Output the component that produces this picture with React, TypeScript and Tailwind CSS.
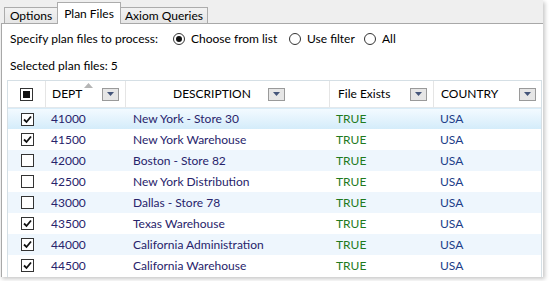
import React from 'react';

type Row = { checked: boolean; dept: string; desc: string };

const rows: Row[] = [
  { checked: true, dept: '41000', desc: 'New York - Store 30' },
  { checked: true, dept: '41500', desc: 'New York Warehouse' },
  { checked: false, dept: '42000', desc: 'Boston - Store 82' },
  { checked: false, dept: '42500', desc: 'New York Distribution' },
  { checked: false, dept: '43000', desc: 'Dallas - Store 78' },
  { checked: true, dept: '43500', desc: 'Texas Warehouse' },
  { checked: true, dept: '44000', desc: 'California Administration' },
  { checked: true, dept: '44500', desc: 'California Warehouse' },
];

const Check = ({ checked }: { checked: boolean }) => (
  <div className="w-[13px] h-[13px] border border-[#333] bg-white flex items-center justify-center">
    {checked && (
      <svg width="9" height="9" viewBox="0 0 9 9">
        <path d="M1 4.5 L3.5 7 L8 1.5" stroke="#111" strokeWidth="1.8" fill="none" />
      </svg>
    )}
  </div>
);

const Radio = ({ on, label, w }: { on?: boolean; label: string; w: string }) => (
  <label className={`flex items-center gap-[6px] ${w}`}>
    <span className="w-[12px] h-[12px] rounded-full border border-[#333] bg-white flex items-center justify-center">
      {on && <span className="w-[6px] h-[6px] rounded-full bg-[#111]" />}
    </span>
    <span>{label}</span>
  </label>
);

const DropBtn = () => (
  <div className="w-[17px] h-[13px] border border-[#9a9a9a] bg-[#e6e6e6] flex items-center justify-center">
    <svg width="7" height="4" viewBox="0 0 7 4">
      <path d="M0 0 H7 L3.5 4 Z" fill="#44557a" />
    </svg>
  </div>
);

const App = () => {
  return (
    <div className="w-[549px] h-[281px] bg-white text-[12px] text-black" style={{ fontFamily: 'Lato, "Noto Sans", sans-serif' }}>
      <div className="w-[543px] h-[277px] bg-[#efefef] flex flex-col shadow-[2px_2px_4px_rgba(0,0,0,0.22)]">
        {/* tabs */}
        <div className="h-[23px] flex items-end pl-[4px] relative z-10">
          <div className="h-[16px] w-[54px] border border-b-0 border-[#acacac] bg-gradient-to-b from-[#f2f2f2] to-[#e6e6e6] flex items-center justify-center leading-none pt-[1px]">
            Options
          </div>
          <div className="h-[22px] w-[64px] -ml-px -mb-px border border-b-0 border-[#acacac] bg-white flex items-center justify-center leading-none">
            Plan Files
          </div>
          <div className="h-[16px] w-[88px] -ml-px border border-b-0 border-[#acacac] bg-gradient-to-b from-[#f2f2f2] to-[#e6e6e6] flex items-center justify-center leading-none pt-[1px]">
            Axiom Queries
          </div>
        </div>

        {/* panel */}
        <div className="flex-1 ml-px border-t border-l border-[#a8a8a8] bg-white flex flex-col min-h-0">
          <div className="h-[16px] mt-[7px] pl-[8px] flex items-center">
            <span className="w-[164px]">Specify plan files to process:</span>
            <div className="flex items-center -ml-[1px]">
              <Radio on label="Choose from list" w="w-[116px]" />
              <Radio label="Use filter" w="w-[75px]" />
              <Radio label="All" w="w-[40px]" />
            </div>
          </div>
          <div className="h-[16px] mt-[11px] pl-[8px] flex items-center">Selected plan files: 5</div>

          {/* grid */}
          <div className="mt-[6px] ml-[5px] mr-[1px] flex-1 border-l border-t border-r border-[#d5dfe5] overflow-hidden">
            <div className="grid grid-cols-[38px_80px_204px_104px_107px] h-[27px] border-b border-[#e3e8ec] bg-white">
              <div className="flex items-center justify-center border-r border-[#e5e5e5]">
                <div className="w-[13px] h-[13px] border border-[#333] bg-white flex items-center justify-center">
                  <div className="w-[7px] h-[7px] bg-[#111]" />
                </div>
              </div>
              <div className="relative flex items-center justify-between pl-[6px] pr-[6px] border-r border-[#e5e5e5]">
                <svg className="absolute left-[38px] top-[2px]" width="9" height="5" viewBox="0 0 9 5">
                  <path d="M0 5 L4.5 0 L9 5 Z" fill="#b5b5b5" />
                </svg>
                <span>DEPT</span>
                <DropBtn />
              </div>
              <div className="flex items-center justify-between pl-[47px] pr-[44px] border-r border-[#e5e5e5]">
                <span>DESCRIPTION</span>
                <DropBtn />
              </div>
              <div className="flex items-center justify-between pl-[8px] pr-[6px] border-r border-[#e5e5e5]">
                <span>File Exists</span>
                <DropBtn />
              </div>
              <div className="flex items-center justify-between pl-[7px] pr-[5px]">
                <span>COUNTRY</span>
                <DropBtn />
              </div>
            </div>

            {rows.map((r, i) => {
              const bg =
                i === 0
                  ? 'bg-gradient-to-b from-[#f3faff] to-[#d4ecfa] border-t border-[#d8ecf8]'
                  : i % 2 === 0
                  ? 'bg-[#eef6fd]'
                  : 'bg-white';
              return (
                <div key={r.dept} className={`grid grid-cols-[38px_80px_204px_104px_107px] h-[21px] items-center ${bg}`}>
                  <div className="flex justify-center">
                    <Check checked={r.checked} />
                  </div>
                  <div className="pl-[5px] text-[#27236b]">{r.dept}</div>
                  <div className="pl-[7px] text-[#27236b]">{r.desc}</div>
                  <div className="pl-[6px] text-[#1f7a1f]">TRUE</div>
                  <div className="pl-[6px] text-[#203d88]">USA</div>
                </div>
              );
            })}
          </div>
        </div>
      </div>
    </div>
  );
};

export default App;
